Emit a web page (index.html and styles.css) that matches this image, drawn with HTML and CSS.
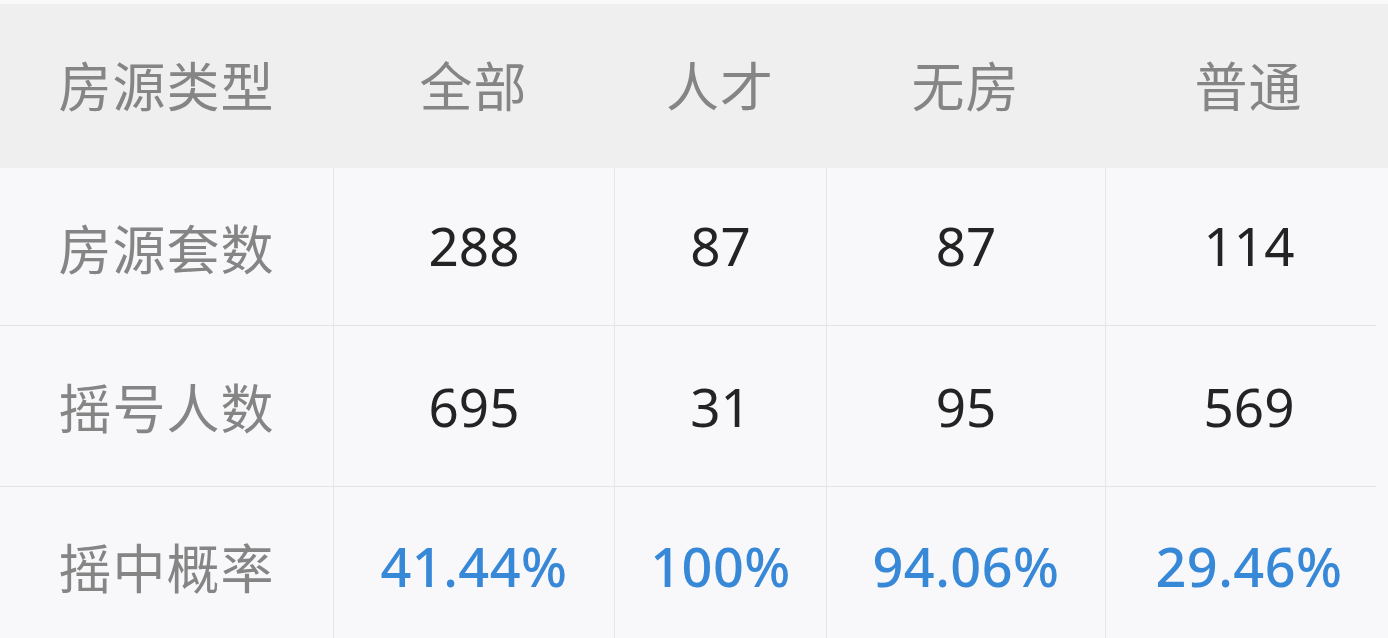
FILE: index.html
```html
<!DOCTYPE html>
<html lang="zh-CN">
<head>
<meta charset="utf-8">
<title>摇号概率</title>
<link rel="stylesheet" href="styles.css">
</head>
<body>
<div class="page">
  <div class="head">
    <div class="cell label">房源类型</div>
    <div class="cell label">全部</div>
    <div class="cell label">人才</div>
    <div class="cell label">无房</div>
    <div class="cell label last">普通</div>
  </div>
  <div class="row first">
    <div class="cell label">房源套数</div>
    <div class="cell num">288</div>
    <div class="cell num">87</div>
    <div class="cell num">87</div>
    <div class="cell num last">114</div>
  </div>
  <div class="row">
    <div class="cell label">摇号人数</div>
    <div class="cell num">695</div>
    <div class="cell num">31</div>
    <div class="cell num">95</div>
    <div class="cell num last">569</div>
  </div>
  <div class="row final">
    <div class="cell label">摇中概率</div>
    <div class="cell pct">41.44%</div>
    <div class="cell pct">100%</div>
    <div class="cell pct">94.06%</div>
    <div class="cell pct last">29.46%</div>
  </div>
</div>
</body>
</html>
```
FILE: styles.css
```css
* { box-sizing: border-box; margin: 0; padding: 0; }
html, body { width: 1388px; height: 638px; overflow: hidden; }
body {
  background: #f8f8fa;
  font-family: "Noto Sans", "Noto Sans CJK SC", sans-serif;
}
.page {
  display: flex;
  flex-direction: column;
  padding-top: 4px;
  background: linear-gradient(#f9f9f9, #f9f9f9) top / 100% 4px no-repeat, #f8f8fa;
}
.head, .row {
  display: grid;
  grid-template-columns: 333px 281px 212px 279px 271px;
}
.head {
  height: 164px;
  background: #efefef;
  width: 1388px;
  grid-template-columns: 333px 281px 212px 279px 283px;
}
.row {
  height: 161px;
  width: 1376px;
  border-bottom: 1px solid #e4e4e7;
}
.row.first { height: 158px; }
.row.final { border-bottom: none; height: 152px; }
.cell {
  display: flex;
  align-items: center;
  justify-content: center;
}
.row .cell + .cell { border-left: 1px solid #e6e6e9; }
.row .cell.last { padding-left: 16px; }
.head .cell.last { padding-left: 4px; }
.label {
  font-family: "Noto Sans CJK SC", sans-serif;
  font-size: 53px;
  color: #858585;
  letter-spacing: 1px;
}
.head .cell { padding-bottom: 4px; }
.num {
  font-size: 53px;
  color: #232323;
  font-weight: 400;
}
.row.first .num { padding-bottom: 2px; }
.pct {
  font-size: 54px;
  color: #3888d8;
  font-weight: 500;
  letter-spacing: 0.5px;
  padding-top: 6px;
}
.row.final .cell.label { padding-top: 6px; }
```
